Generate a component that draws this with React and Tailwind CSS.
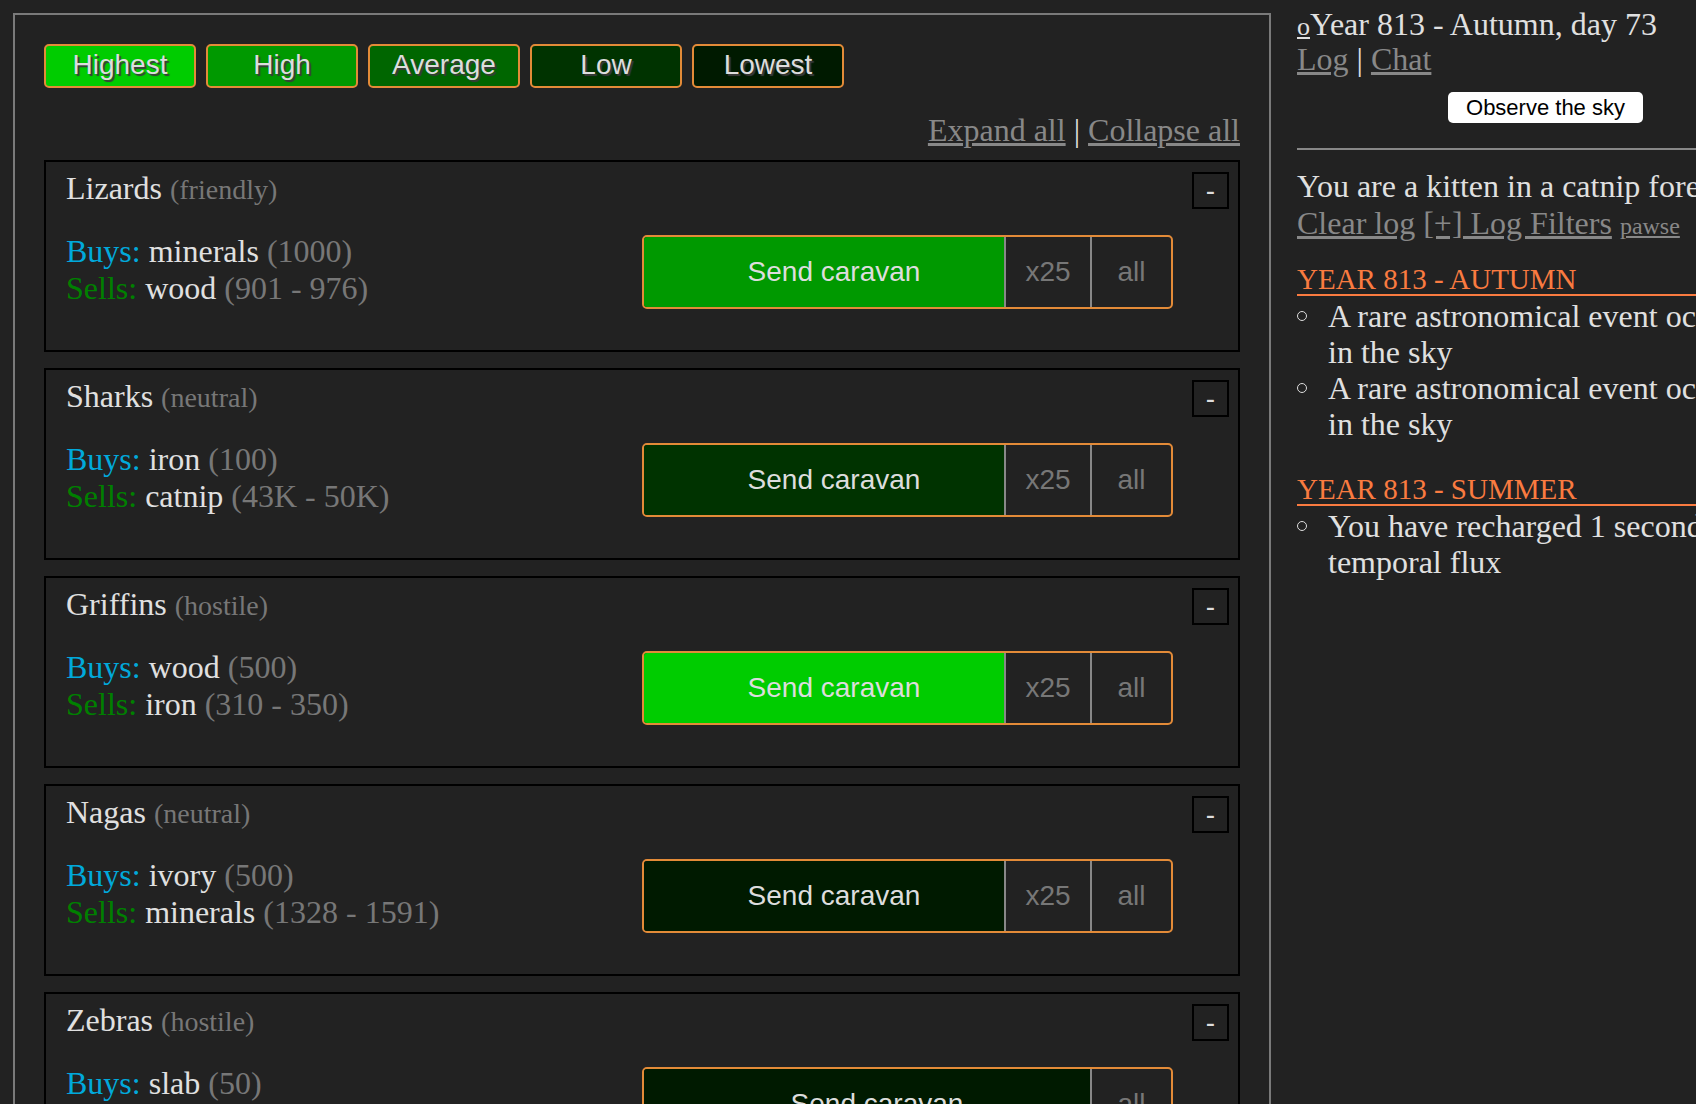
const filters = [
  { label: 'Highest', bg: 'bg-[#00cc00]' },
  { label: 'High', bg: 'bg-[#009900]' },
  { label: 'Average', bg: 'bg-[#006600]' },
  { label: 'Low', bg: 'bg-[#003300]' },
  { label: 'Lowest', bg: 'bg-[#001a00]' },
]

const races = [
  { name: 'Lizards', attitude: 'friendly', buys: 'minerals', buysAmt: '(1000)', sells: 'wood', sellsAmt: '(901 - 976)', bg: 'bg-[#009900]', bulk: true },
  { name: 'Sharks', attitude: 'neutral', buys: 'iron', buysAmt: '(100)', sells: 'catnip', sellsAmt: '(43K - 50K)', bg: 'bg-[#003300]', bulk: true },
  { name: 'Griffins', attitude: 'hostile', buys: 'wood', buysAmt: '(500)', sells: 'iron', sellsAmt: '(310 - 350)', bg: 'bg-[#00cc00]', bulk: true },
  { name: 'Nagas', attitude: 'neutral', buys: 'ivory', buysAmt: '(500)', sells: 'minerals', sellsAmt: '(1328 - 1591)', bg: 'bg-[#001a00]', bulk: true },
  { name: 'Zebras', attitude: 'hostile', buys: 'slab', buysAmt: '(50)', sells: 'titanium', sellsAmt: '(10 - 14)', bg: 'bg-[#001a00]', bulk: false },
]

function RacePanel({ race }) {
  return (
    <div className="h-[192px] shrink-0 border-2 border-black pl-[20px] pr-[9px] pt-[8px]">
      <div className="flex items-start justify-between">
        <div className="text-[32px] leading-[37px] text-[#e0e0e0]">
          {race.name} <span className="text-[28px] text-[#777]">({race.attitude})</span>
        </div>
        <button
          type="button"
          className="mt-[2px] flex h-[37px] w-[37px] items-center justify-center border-2 border-black font-['Liberation_Sans',Arial,sans-serif] text-[28px] leading-none text-[#ddd]"
        >
          -
        </button>
      </div>

      <div className="mt-[24px] flex items-start">
        <div className="w-[576px] shrink-0 text-[32px] leading-[37px] text-[#e0e0e0]">
          <div>
            <span className="text-[#01a9db]">Buys:</span> {race.buys}{' '}
            <span className="text-[#777]">{race.buysAmt}</span>
          </div>
          <div>
            <span className="text-[#008000]">Sells:</span> {race.sells}{' '}
            <span className="text-[#777]">{race.sellsAmt}</span>
          </div>
        </div>

        <div className="mt-[2px] flex h-[74px] w-[531px] shrink-0 overflow-hidden rounded-[5px] border-2 border-[#e38b38] font-['Liberation_Sans',Arial,sans-serif] text-[28px]">
          <div className={`flex flex-1 items-center justify-center pl-[20px] text-[#ddd] ${race.bg}`}>
            Send caravan
          </div>
          {race.bulk && (
            <div className="flex w-[86px] items-center justify-center border-l-2 border-[#888] text-[#777]">
              x25
            </div>
          )}
          <div className="flex w-[81px] items-center justify-center border-l-2 border-[#888] text-[#777]">
            all
          </div>
        </div>
      </div>
    </div>
  )
}

function LogItem({ children }) {
  return (
    <li className="flex">
      <span className="w-[31px] shrink-0">
        <span className="mt-[13px] block h-[10px] w-[10px] rounded-full border-[1.5px] border-[#ddd]" />
      </span>
      <span>{children}</span>
    </li>
  )
}

export default function App() {
  return (
    <div className="flex h-screen w-full overflow-hidden bg-[#222] font-['Liberation_Serif','Times_New_Roman',serif]">
      <div className="ml-[13px] mt-[13px] w-[1258px] shrink-0 self-start border-2 border-[#7a7a7a] px-[29px] pt-[29px]">
        <div className="flex gap-[10px]">
          {filters.map((f) => (
            <button
              key={f.label}
              type="button"
              className={`h-[44px] w-[152px] rounded-[5px] border-2 border-[#e38b38] pb-[3px] font-['Liberation_Sans',Arial,sans-serif] text-[28px] leading-none text-[#ddd] [text-shadow:2px_2px_1px_#3a3a3a] ${f.bg}`}
            >
              {f.label}
            </button>
          ))}
        </div>

        <div className="mt-[24px] text-right text-[32px] leading-[37px] text-[#ddd]">
          <a className="text-[#888] underline">Expand all</a> | <a className="text-[#888] underline">Collapse all</a>
        </div>

        <div className="mt-[11px] flex flex-col gap-[16px]">
          {races.map((race) => (
            <RacePanel key={race.name} race={race} />
          ))}
        </div>
      </div>

      <div className="ml-[26px] w-[500px] shrink-0 pt-[7px] text-[#e0e0e0]">
        <div className="h-[34px] whitespace-nowrap text-[32px] leading-[34px]">
          <span className="text-[26px] leading-none underline">o</span>Year 813 - Autumn, day 73
        </div>
        <div className="text-[32px] leading-[37px]">
          <a className="text-[#888] underline">Log</a> | <a className="text-[#888] underline">Chat</a>
        </div>
        <button
          type="button"
          className="ml-[151px] mt-[14px] h-[31px] w-[195px] rounded-[5px] bg-white font-['Liberation_Sans',Arial,sans-serif] text-[22px] leading-none text-black"
        >
          Observe the sky
        </button>
        <div className="mt-[25px] h-[2px] w-[420px] bg-[#888]" />

        <div className="mt-[18px] whitespace-nowrap text-[32px] leading-[37px]">
          You are a kitten in a catnip forest.
        </div>
        <div className="whitespace-nowrap text-[32px] leading-[37px]">
          <a className="text-[#888] underline">Clear log</a>{' '}
          <a className="text-[#888] underline">[+] Log Filters</a>{' '}
          <a className="text-[24px] text-[#888] underline">pawse</a>
        </div>

        <div className="mt-[19px] w-[420px] border-b-2 border-[#fa7b40] text-[29px] leading-[30px] text-[#fa7b40]">
          YEAR 813 - AUTUMN
        </div>
        <ul className="mt-[2px] text-[32px] leading-[36px]">
          <LogItem>A rare astronomical event occurred in the sky</LogItem>
          <LogItem>A rare astronomical event occurred in the sky</LogItem>
        </ul>

        <div className="mt-[32px] w-[420px] border-b-2 border-[#fa7b40] text-[29px] leading-[30px] text-[#fa7b40]">
          YEAR 813 - SUMMER
        </div>
        <ul className="mt-[2px] text-[32px] leading-[36px]">
          <LogItem>You have recharged 1 second of temporal flux</LogItem>
        </ul>
      </div>
    </div>
  )
}
